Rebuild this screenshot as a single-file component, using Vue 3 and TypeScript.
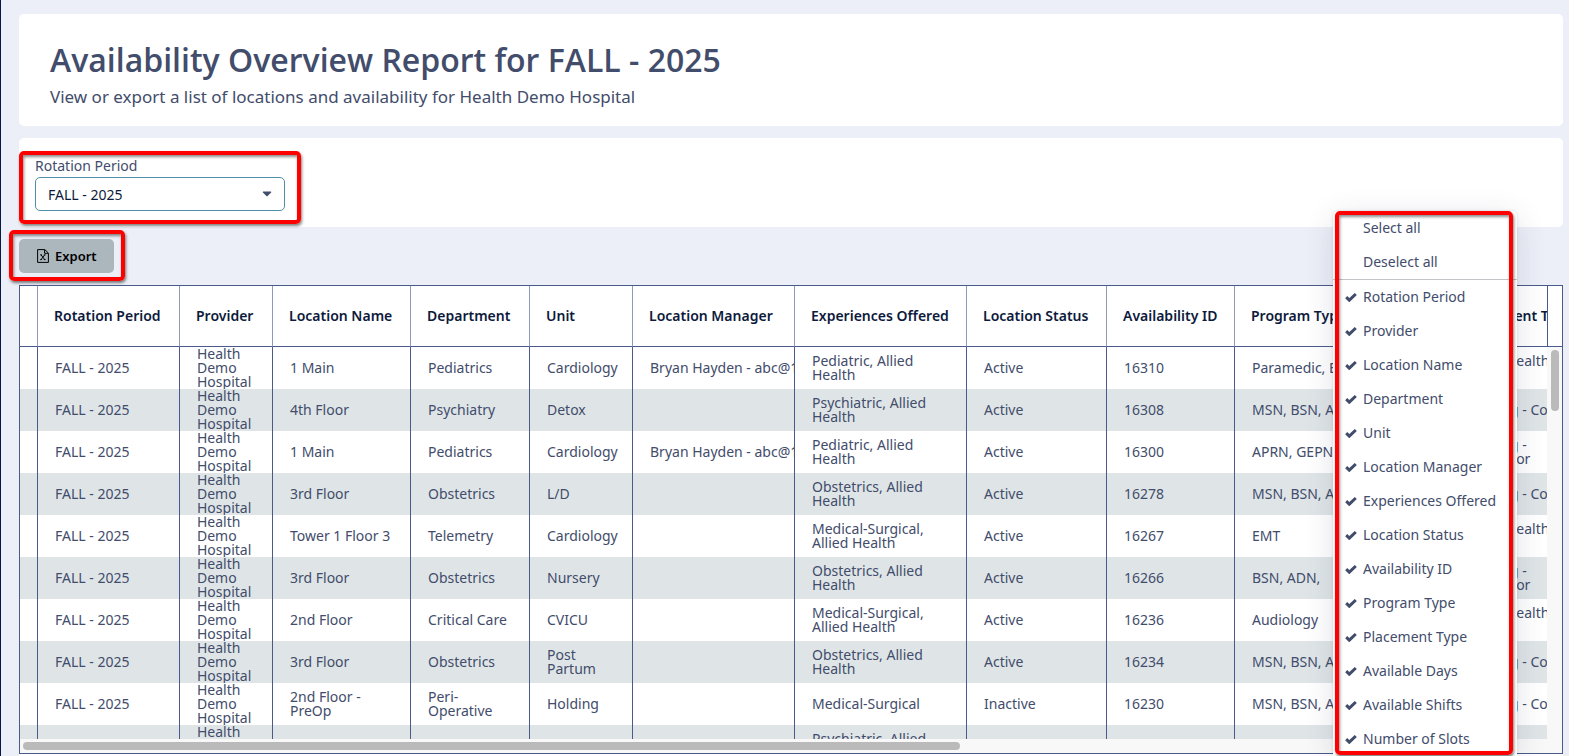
<script setup lang="ts">
import { ref } from 'vue'

interface Row {
  location: string[]
  department: string[]
  unit: string[]
  manager: string
  experiences: string[]
  status: string
  id: string
  program: string
  placement: string[]
}

const columns = [
  { label: 'Rotation Period', cls: 'c-period' },
  { label: 'Provider', cls: 'c-provider' },
  { label: 'Location Name', cls: 'c-location' },
  { label: 'Department', cls: 'c-department' },
  { label: 'Unit', cls: 'c-unit' },
  { label: 'Location Manager', cls: 'c-manager' },
  { label: 'Experiences Offered', cls: 'c-experiences' },
  { label: 'Location Status', cls: 'c-status' },
  { label: 'Availability ID', cls: 'c-id' },
  { label: 'Program Type', cls: 'c-program' },
  { label: 'Placement Type', cls: 'c-placement' },
]

const manager = 'Bryan Hayden - abc@123.com'
const allied = ['Allied Health -', 'Cohort']
const cohort = ['Nursing - Cohort']
const preceptor = ['Nursing -', 'Preceptor']

const rows: Row[] = [
  { location: ['1 Main'], department: ['Pediatrics'], unit: ['Cardiology'], manager, experiences: ['Pediatric, Allied', 'Health'], status: 'Active', id: '16310', program: 'Paramedic, EMT', placement: allied },
  { location: ['4th Floor'], department: ['Psychiatry'], unit: ['Detox'], manager: '', experiences: ['Psychiatric, Allied', 'Health'], status: 'Active', id: '16308', program: 'MSN, BSN, ADN', placement: cohort },
  { location: ['1 Main'], department: ['Pediatrics'], unit: ['Cardiology'], manager, experiences: ['Pediatric, Allied', 'Health'], status: 'Active', id: '16300', program: 'APRN, GEPN, MSN', placement: preceptor },
  { location: ['3rd Floor'], department: ['Obstetrics'], unit: ['L/D'], manager: '', experiences: ['Obstetrics, Allied', 'Health'], status: 'Active', id: '16278', program: 'MSN, BSN, ADN', placement: cohort },
  { location: ['Tower 1 Floor 3'], department: ['Telemetry'], unit: ['Cardiology'], manager: '', experiences: ['Medical-Surgical,', 'Allied Health'], status: 'Active', id: '16267', program: 'EMT', placement: allied },
  { location: ['3rd Floor'], department: ['Obstetrics'], unit: ['Nursery'], manager: '', experiences: ['Obstetrics, Allied', 'Health'], status: 'Active', id: '16266', program: 'BSN, ADN,', placement: preceptor },
  { location: ['2nd Floor'], department: ['Critical Care'], unit: ['CVICU'], manager: '', experiences: ['Medical-Surgical,', 'Allied Health'], status: 'Active', id: '16236', program: 'Audiology', placement: allied },
  { location: ['3rd Floor'], department: ['Obstetrics'], unit: ['Post', 'Partum'], manager: '', experiences: ['Obstetrics, Allied', 'Health'], status: 'Active', id: '16234', program: 'MSN, BSN, ADN', placement: cohort },
  { location: ['2nd Floor -', 'PreOp'], department: ['Peri-', 'Operative'], unit: ['Holding'], manager: '', experiences: ['Medical-Surgical'], status: 'Inactive', id: '16230', program: 'MSN, BSN, ADN', placement: cohort },
  { location: [], department: [], unit: [], manager: '', experiences: ['Psychiatric, Allied', 'Health'], status: '', id: '', program: '', placement: [] },
]

const period = ref('FALL - 2025')

const options = ref(
  [
    'Rotation Period', 'Provider', 'Location Name', 'Department', 'Unit',
    'Location Manager', 'Experiences Offered', 'Location Status', 'Availability ID',
    'Program Type', 'Placement Type', 'Available Days', 'Available Shifts', 'Number of Slots',
  ].map((label) => ({ label, checked: true })),
)

function setAll(checked: boolean) {
  options.value.forEach((o) => (o.checked = checked))
}
</script>

<template>
  <div class="page">
    <header class="card heading">
      <h1>Availability Overview Report for FALL - 2025</h1>
      <p>View or export a list of locations and availability for Health Demo Hospital</p>
    </header>

    <section class="card filters">
      <div class="field callout callout-filter">
        <label for="period">Rotation Period</label>
        <div class="select-box">
          <select id="period" v-model="period">
            <option>FALL - 2025</option>
          </select>
          <svg class="caret" viewBox="0 0 10 6" aria-hidden="true"><path d="M1.2 0.5h7.6q0.9 0.3 0.3 1L5.6 5q-0.6 0.6-1.2 0L0.9 1.5q-0.6-0.7 0.3-1z" /></svg>
        </div>
      </div>
    </section>

    <div class="toolbar">
      <div class="callout callout-export">
        <button type="button" class="export">
          <svg viewBox="0 0 12 14" aria-hidden="true">
            <path d="M0.6 0.6h7.2l3.6 3.5v9.3H0.6z" />
            <path d="M7.6 0.8v3.5h3.6" />
            <path d="M3.2 5.9h1.8M6.8 5.9h1.8M3.2 10.6h1.8M6.8 10.6h1.8M4.1 5.9l3.6 4.7M7.7 5.9l-3.6 4.7" />
          </svg>
          <span>Export</span>
        </button>
      </div>
    </div>

    <section class="grid">
      <div class="viewport">
        <table>
          <colgroup>
            <col class="c-handle" />
            <col v-for="c in columns" :key="c.label" :class="c.cls" />
          </colgroup>
          <thead>
            <tr>
              <td></td>
              <th v-for="c in columns" :key="c.label" scope="col">{{ c.label }}</th>
            </tr>
          </thead>
          <tbody>
            <tr v-for="(r, i) in rows" :key="i">
              <td></td>
              <td>{{ r.id ? 'FALL - 2025' : '' }}</td>
              <td>Health<br />Demo<br />Hospital</td>
              <td><div v-for="t in r.location" :key="t">{{ t }}</div></td>
              <td><div v-for="t in r.department" :key="t">{{ t }}</div></td>
              <td><div v-for="t in r.unit" :key="t">{{ t }}</div></td>
              <td>{{ r.manager }}</td>
              <td><div v-for="t in r.experiences" :key="t">{{ t }}</div></td>
              <td>{{ r.status }}</td>
              <td>{{ r.id }}</td>
              <td>{{ r.program }}</td>
              <td><div v-for="t in r.placement" :key="t">{{ t }}</div></td>
            </tr>
          </tbody>
        </table>
      </div>
      <div class="gutter">
        <div class="gutter-head"></div>
        <div class="v-track"><div class="v-thumb"></div></div>
      </div>
      <div class="h-track"><div class="h-thumb"></div></div>
    </section>

    <aside class="menu" aria-label="Column chooser">
      <div class="menu-body">
        <div class="actions">
          <button type="button" @click="setAll(true)">Select all</button>
          <button type="button" @click="setAll(false)">Deselect all</button>
        </div>
        <label v-for="o in options" :key="o.label" class="option">
          <input v-model="o.checked" type="checkbox" />
          <svg viewBox="0 0 12 10" aria-hidden="true"><path d="M1.2 5.2L4.3 8.2L10.8 2" /></svg>
          <span>{{ o.label }}</span>
        </label>
      </div>
      <div class="menu-frame"></div>
    </aside>
  </div>
</template>

<style>
html,
body {
  background: #eceff7;
}
</style>

<style scoped>
* {
  box-sizing: border-box;
}

.page {
  position: relative;
  display: flex;
  flex-direction: column;
  height: 100vh;
  overflow: hidden;
  padding: 14px 6px 2px 18px;
  border-left: 1px solid #0b1740;
  background: #eceff7;
  color: #424c6b;
  font: 14px/20px 'Noto Sans', 'Open Sans', sans-serif;
}

/* Collapsed side panel handle on the window's edge */
.page::before {
  content: '';
  position: absolute;
  top: 490px;
  left: -1px;
  width: 1px;
  height: 38px;
  background: #8799a5;
}

.card {
  flex: none;
  background: #fff;
  border-radius: 5px;
}

.heading {
  padding: 22px 31px 16px;
}

h1 {
  margin: 0;
  font-family: 'Open Sans', 'Noto Sans', sans-serif;
  font-size: 32px;
  line-height: 48px;
  font-weight: 600;
  white-space: nowrap;
}

p {
  margin: 0;
  font-size: 17px;
  line-height: 26px;
}

.filters {
  margin-top: 12px;
  padding: 13px 0 3px;
}

.callout {
  border: 4px solid #fe0000;
  border-radius: 5px;
  box-shadow: 1px 2px 3px rgba(0, 0, 0, 0.5), inset 1px 2px 3px rgba(0, 0, 0, 0.45);
}

.callout-filter {
  width: 282px;
  padding: 1px 12px 9px;
}

.field label {
  display: block;
}

.select-box {
  position: relative;
  margin-top: 1px;
}

select {
  display: block;
  width: 100%;
  height: 34px;
  padding: 2px 12px 0;
  appearance: none;
  border: 1px solid #4f8fa8;
  border-radius: 5px;
  background: #fff;
  color: #0d1a3c;
  font: inherit;
}

.caret {
  position: absolute;
  top: 14px;
  right: 13px;
  width: 10px;
  height: 6px;
  fill: #424c6b;
}

.toolbar {
  flex: none;
  display: flex;
  margin: 3px 0 4px -10px;
}

.callout-export {
  padding: 5px 7px 4px 6px;
}

.export {
  display: flex;
  align-items: center;
  gap: 6px;
  height: 34px;
  padding: 0 17px 0 18px;
  border: 0;
  border-radius: 5px;
  background: #abb6bd;
  color: #000;
  font: 600 13px/20px 'Noto Sans', 'Open Sans', sans-serif;
}

.export svg {
  width: 12px;
  height: 14px;
  fill: none;
  stroke: #000;
  stroke-width: 1;
}

.grid {
  flex: 1;
  min-height: 0;
  display: grid;
  grid-template-columns: minmax(0, 1fr) 15px;
  grid-template-rows: minmax(0, 1fr) 14px;
  border: 1px solid #4a5a8a;
  background: #fff;
  box-shadow: 0 2px 0 #fff;
}

.viewport {
  overflow: hidden;
}

table {
  table-layout: fixed;
  width: 1620px;
  border-collapse: separate;
  border-spacing: 0;
  line-height: 14px;
}

.c-handle { width: 18px; }
.c-period { width: 142px; }
.c-provider { width: 93px; }
.c-location { width: 138px; }
.c-department { width: 119px; }
.c-unit { width: 103px; }
.c-manager { width: 162px; }
.c-experiences { width: 172px; }
.c-status { width: 140px; }
.c-id { width: 128px; }
.c-program { width: 214px; }
.c-placement { width: 191px; }

th,
td {
  overflow: hidden;
  padding: 0 0 0 17px;
  border-right: 1px solid #4a5a8a;
  text-align: left;
  vertical-align: middle;
  white-space: nowrap;
}

thead th,
thead td {
  height: 61px;
  padding-left: 16px;
  border-right-color: #8f99ba;
  border-bottom: 1px solid #4a5a8a;
  color: #0d1a3c;
  font-weight: 600;
}

tbody td {
  height: 42px;
}

tbody tr:nth-child(even) {
  background: #dfe5e7;
}

.gutter {
  display: flex;
  flex-direction: column;
}

.gutter-head {
  height: 61px;
  border-left: 1px solid #4a5a8a;
  border-bottom: 1px solid #4a5a8a;
}

.v-track {
  flex: 1;
  padding: 3px 3px 3px 4px;
  background: #f8f8f8;
}

.v-thumb {
  width: 8px;
  height: 61px;
  border-radius: 4px;
  background: #bababa;
}

.h-track {
  grid-column: 1 / -1;
  padding: 3px;
  background: #f8f8f8;
}

.h-thumb {
  width: 61%;
  height: 8px;
  border-radius: 4px;
  background: #bababa;
}

.menu {
  position: absolute;
  top: 211px;
  right: 52px;
  bottom: 0;
  width: 184px;
  border-radius: 5px 5px 0 0;
  background: #fff;
  box-shadow: 0 6px 30px rgba(40, 50, 90, 0.14), 0 0 3px rgba(0, 0, 0, 0.12);
}

.menu-body {
  height: 100%;
  overflow: hidden;
}

.actions {
  border-bottom: 1px solid #c2c4c8;
}

.actions button {
  display: block;
  width: 100%;
  height: 34px;
  padding: 0 0 0 30px;
  border: 0;
  background: none;
  color: inherit;
  font: inherit;
  text-align: left;
}

.option {
  position: relative;
  display: flex;
  align-items: center;
  gap: 6px;
  height: 34px;
  padding-left: 12px;
  white-space: nowrap;
}

.option input {
  position: absolute;
  width: 12px;
  height: 12px;
  margin: 0;
  opacity: 0;
}

.option svg {
  width: 12px;
  height: 10px;
  fill: none;
  stroke: #424c6b;
  stroke-width: 3;
}

.option input:not(:checked) + svg {
  visibility: hidden;
}

.menu-frame {
  position: absolute;
  inset: 0 4px 1px 2px;
  border: 4px solid #fe0000;
  border-radius: 5px;
  box-shadow: 1px 2px 3px rgba(0, 0, 0, 0.5), inset 1px 2px 3px rgba(0, 0, 0, 0.45);
  pointer-events: none;
}
</style>
